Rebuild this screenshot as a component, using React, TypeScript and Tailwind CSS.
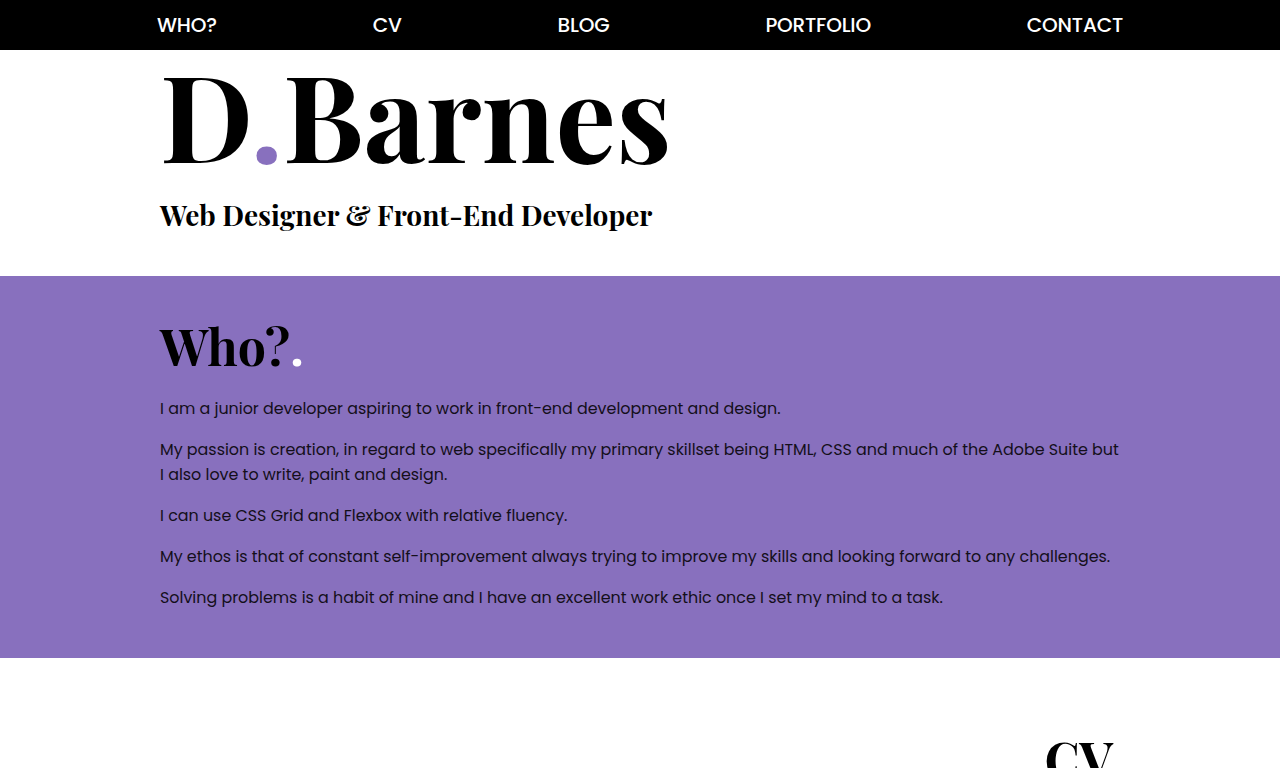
export default function App() {
  const nav = ['WHO?', 'CV', 'BLOG', 'PORTFOLIO', 'CONTACT'];
  const serif = "font-['Playfair_Display','Liberation_Serif','DejaVu_Serif',serif]";
  const sans = "font-['Poppins','Inter','Noto_Sans',sans-serif]";

  return (
    <div className={`min-h-screen bg-white ${sans}`}>
      <nav className="bg-black h-[50px]">
        <ul className="w-[966px] mx-auto h-full flex items-center justify-between">
          {nav.map((item) => (
            <li key={item}>
              <a href="#" className="block text-white text-[20px] leading-[30px] font-medium tracking-[-0.2px]">
                {item}
              </a>
            </li>
          ))}
        </ul>
      </nav>

      <header className="w-[960px] mx-auto h-[226px] pt-[3px]">
        <h1 className={`${serif} font-bold text-[120px] leading-[120px]`}>
          D<span className="text-[#8870be]">.</span>Barnes
        </h1>
        <h2 className={`${serif} font-bold text-[28px] leading-none mt-[28px]`}>
          Web Designer &amp; Front-End Developer
        </h2>
      </header>

      <section className="bg-[#8870be] h-[382px]">
        <div className="w-[960px] mx-auto pt-[45px]">
          <h2 className={`${serif} font-bold text-[50px] leading-none`}>
            Who?<span className="text-white">.</span>
          </h2>
          <div className="w-[964px] mt-[25px] text-[15.9px] leading-[25px] text-[#140f1a] space-y-[16px]">
            <p>I am a junior developer aspiring to work in front-end development and design.</p>
            <p>
              My passion is creation, in regard to web specifically my primary skillset being HTML, CSS and much of the Adobe Suite but I also love to write, paint and design.
            </p>
            <p>I can use CSS Grid and Flexbox with relative fluency.</p>
            <p>My ethos is that of constant self-improvement always trying to improve my skills and looking forward to any challenges.</p>
            <p>Solving problems is a habit of mine and I have an excellent work ethic once I set my mind to a task.</p>
          </div>
        </div>
      </section>

      <section className="w-[960px] mx-auto pt-[76px] flex justify-end">
        <h2 className={`${serif} font-bold text-[50px] leading-none pr-[7px]`}>CV</h2>
      </section>
    </div>
  );
}
